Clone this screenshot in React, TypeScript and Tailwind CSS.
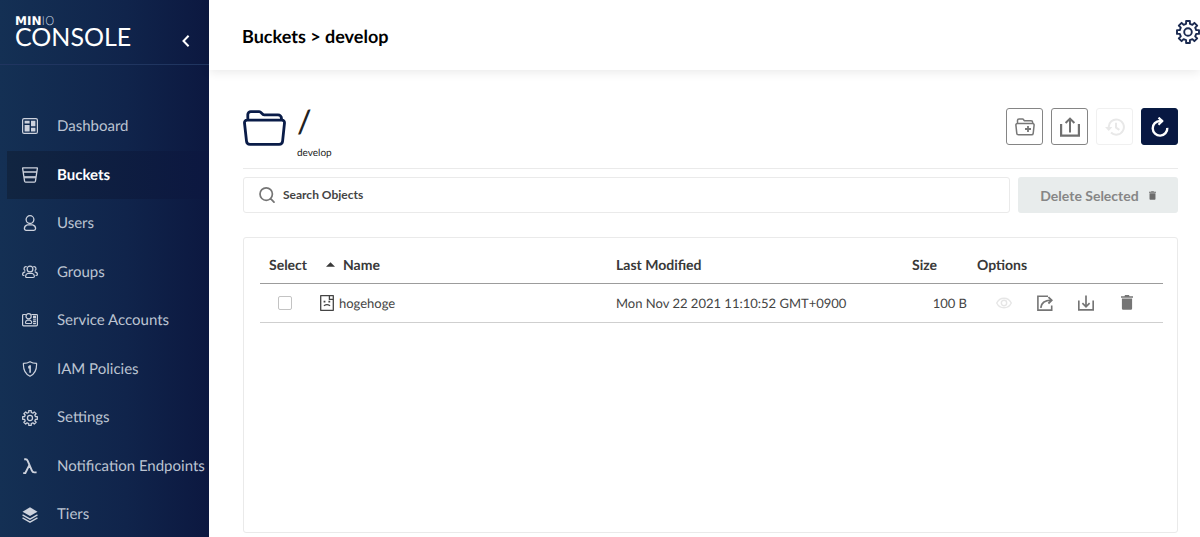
import React from "react";

type IconProps = { className?: string };

const stroke = {
  fill: "none",
  stroke: "currentColor",
  strokeLinecap: "round" as const,
  strokeLinejoin: "round" as const,
};

const DashboardIcon = ({ className }: IconProps) => (
  <svg viewBox="0 0 16 16" className={className} aria-hidden="true">
    <rect x="0.6" y="0.6" width="14.8" height="14.8" rx="1.5" {...stroke} strokeWidth="1.2" />
    <path fill="currentColor" d="M2.6 2.7h5v2.8h-5zM9 2.7h4.4v5.6H9zM2.6 7h5v6.4h-5zM9 9.8h4.4v3.6H9z" />
  </svg>
);

const BucketIcon = ({ className }: IconProps) => (
  <svg viewBox="0 0 16 16" className={className} aria-hidden="true">
    <path {...stroke} strokeWidth="1.3" d="M1 .8h14a.4.4 0 0 1 .4.5l-2 13a1 1 0 0 1-1 .9H3.600a1 1 0 0 1-1-.9L.6 1.300A.4.4 0 0 1 1 .8zM1.300 5h13.400M2 10h12" />
    <path fill="currentColor" opacity=".6" d="M2.300 9.600h11.400l-.2 2h-11z" />
  </svg>
);

const UserIcon = ({ className }: IconProps) => (
  <svg viewBox="0 0 16 16" className={className} aria-hidden="true">
    <circle cx="8" cy="4.600" r="3.900" {...stroke} strokeWidth="1.300" />
    <path {...stroke} strokeWidth="1.300" d="M5.300 9.800h5.400c2 .6 2.900 2.200 2.900 3.700 0 1.200-.7 1.800-1.700 1.800H4.100c-1 0-1.700-.6-1.700-1.800 0-1.500.9-3.100 2.900-3.700z" />
  </svg>
);

const GroupsIcon = ({ className }: IconProps) => (
  <svg viewBox="0 0 16 16" className={className} aria-hidden="true">
    <g {...stroke} strokeWidth="1.200">
      <circle cx="8" cy="5" r="2.900" />
      <path d="M6 9.300h4c1.600.5 2.400 1.700 2.400 3 0 .8-.5 1.200-1.200 1.200H4.800c-.7 0-1.200-.4-1.200-1.200 0-1.300.8-2.500 2.400-3z" />
      <path d="M4.200 2.700a2 2 0 0 0-1.400 3.600M2.900 7.800C1.400 8.100.6 9.300.6 10.500c0 .7.4 1 1.400 1M11.800 2.700a2 2 0 0 1 1.400 3.600M13.100 7.800c1.500.3 2.300 1.500 2.300 2.700 0 .7-.4 1-1.400 1" />
    </g>
  </svg>
);

const ServiceAccountsIcon = ({ className }: IconProps) => (
  <svg viewBox="0 0 16 16" className={className} aria-hidden="true">
    <g {...stroke} strokeWidth="1.200">
      <path d="M3.500 2.500H1.600a1 1 0 0 0-1 1v9.300a1 1 0 0 0 1 1h12.800a1 1 0 0 0 1-1V3.500a1 1 0 0 0-1-1H9.800" />
      <circle cx="6.600" cy="4.300" r="2.600" />
      <path d="M5.200 8.200h2.800c1.100.4 1.700 1.300 1.700 2.200 0 .7-.4 1.100-1 1.100H4.500c-.6 0-1-.4-1-1.100 0-.9.600-1.800 1.700-2.200z" />
      <path d="M11.500 7.800h2M11.500 9.700h2M11.500 11.600h2" />
    </g>
    <path fill="currentColor" d="M11 3.600h3v2.800h-3z" />
  </svg>
);

const PolicyIcon = ({ className }: IconProps) => (
  <svg viewBox="0 0 16 16" className={className} aria-hidden="true">
    <path {...stroke} strokeWidth="1.200" d="M8 .7c2 1.300 4.200 1.700 6.600 1.700.2 5.600-1 10.400-6.600 12.900C2.400 12.800 1.200 8 1.400 2.400 3.800 2.400 6 2 8 .7z" />
    <path fill="currentColor" d="M8.900 4.200v7.600H7.300V7.400H6.200V5.300L7.500 4.200z" />
  </svg>
);

const GearIcon = ({ className }: IconProps) => (
  <svg viewBox="0 0 24 24" className={className} aria-hidden="true">
    <g {...stroke} strokeWidth="1.900">
      <path d="M10.1 1h3.800v2.800l2.500 1 2-2 2.800 2.800-2 2 1 2.500H23v3.800h-2.800l-1 2.500 2 2-2.800 2.800-2-2-2.500 1V23h-3.800v-2.800l-2.500-1-2 2-2.800-2.800 2-2-1-2.500H1v-3.800h2.800l1-2.500-2-2 2.800-2.800 2 2 2.500-1z" />
      <circle cx="12" cy="12" r="3.800" />
    </g>
  </svg>
);

const LambdaIcon = ({ className }: IconProps) => (
  <svg viewBox="0 0 16 16" className={className} aria-hidden="true">
    <path {...stroke} strokeWidth="1.900" strokeLinecap="butt" d="M2.200 1.300h1.400c1.100 0 1.600.4 2.100 1.500l4.200 9.900c.5 1.300 1 1.700 2.200 1.700h2.500M7.600 6.600 3.200 15.200H1.200" />
  </svg>
);

const TiersIcon = ({ className }: IconProps) => (
  <svg viewBox="0 0 16 16" className={className} aria-hidden="true">
    <path fill="currentColor" d="M8 .3 15.500 4.700 8 9.100.5 4.700z" />
    <path {...stroke} strokeWidth="1.400" d="M1 8.200l7 4 7-4M1 11.200l7 4 7-4" />
  </svg>
);

const FolderIcon = ({ className }: IconProps) => (
  <svg viewBox="0 0 43 36" className={className} aria-hidden="true">
    <path
      {...stroke}
      strokeWidth="2.800"
      d="M4.800 10V4.600a3 3 0 0 1 3-3h8.400c2.200 0 2.600 3.300 4.900 3.300H35a3.500 3.500 0 0 1 3.500 3.500V10M4 10.200h35a2.500 2.500 0 0 1 2.500 2.800l-1.900 18.200a3.500 3.500 0 0 1-3.500 3.200H7a3.500 3.500 0 0 1-3.500-3.200L1.500 13A2.500 2.500 0 0 1 4 10.200z"
    />
  </svg>
);

const NewFolderIcon = ({ className }: IconProps) => (
  <svg viewBox="0 0 20 18" className={className} aria-hidden="true">
    <path {...stroke} strokeWidth="1.500" d="M2.500 5.500V2.600a1.500 1.500 0 0 1 1.500-1.500h3.600c1.200 0 1.200 1.700 2.400 1.700h6a1.700 1.700 0 0 1 1.700 1.700v1M2.300 5.500h15.400a1.400 1.400 0 0 1 1.400 1.600l-.9 8.200a1.700 1.700 0 0 1-1.700 1.500h-13a1.700 1.700 0 0 1-1.700-1.500L.9 7.100a1.400 1.400 0 0 1 1.400-1.600z" />
    <path {...stroke} strokeWidth="1.800" strokeLinecap="butt" d="M13 8v6M10 11h6" />
  </svg>
);

const UploadIcon = ({ className }: IconProps) => (
  <svg viewBox="0 0 20 20" className={className} aria-hidden="true">
    <path {...stroke} strokeLinecap="butt" strokeLinejoin="miter" strokeWidth="2.200" d="M1.100 7v11.700h17.800V7" />
    <path {...stroke} strokeLinecap="butt" strokeLinejoin="miter" strokeWidth="2" d="M10 15.500V2M5.600 6 10 1.600 14.400 6" />
  </svg>
);

const HistoryIcon = ({ className }: IconProps) => (
  <svg viewBox="0 0 20 18" className={className} aria-hidden="true">
    <path fill="currentColor" d="M0 9h7.400L3.700 13z" />
    <path {...stroke} strokeLinecap="butt" strokeWidth="2" d="M3.700 9.500A7.600 7.600 0 1 1 6 14.500M11 4.800V9.600l3.400 2.200" />
  </svg>
);

const RefreshIcon = ({ className }: IconProps) => (
  <svg viewBox="0 0 18 20" className={className} aria-hidden="true">
    <path {...stroke} strokeLinecap="butt" strokeWidth="2.400" d="M16.300 10.800A7.300 7.300 0 1 1 9 4h2.500" />
    <path {...stroke} strokeLinecap="butt" strokeLinejoin="miter" strokeWidth="2.200" d="M7.500.6 11.200 4 7.500 7.700" />
  </svg>
);

const SearchIcon = ({ className }: IconProps) => (
  <svg viewBox="0 0 16 16" className={className} aria-hidden="true">
    <path {...stroke} strokeWidth="1.700" d="M11.600 11.600 15 15.200M13.400 7.100A6.200 6.200 0 1 1 1 7.100a6.200 6.200 0 0 1 12.400 0z" />
  </svg>
);

const TrashIcon = ({ className }: IconProps) => (
  <svg viewBox="0 0 12 15" className={className} aria-hidden="true">
    <path fill="currentColor" d="M0 1.200h3.500L4 0h4l.5 1.200H12v1.500H0zM.9 3.600h10.200v10a1.200 1.200 0 0 1-1.200 1.200H2.100a1.200 1.200 0 0 1-1.200-1.200z" />
  </svg>
);

const FileIcon = ({ className }: IconProps) => (
  <svg viewBox="0 0 14 16" className={className} aria-hidden="true">
    <path {...stroke} strokeWidth="1.300" d="M.7.7h12.600v14.600H.7zM9.400.8v3.600h3.800" />
    <path fill="currentColor" d="M3.600 5.700h1.800v1.800H3.600zM8.400 5.700h1.800v1.800H8.400z" />
    <path {...stroke} strokeWidth="1.200" d="M4.300 10.500c1.400-.9 4-.9 5.400 0" />
  </svg>
);

const EyeIcon = ({ className }: IconProps) => (
  <svg viewBox="0 0 16 12" className={className} aria-hidden="true">
    <path {...stroke} strokeWidth="1.400" d="M.7 6C2.300 2.800 5 1.200 8 1.200S13.700 2.800 15.300 6C13.700 9.200 11 10.800 8 10.800S2.300 9.200.7 6z" />
    <circle cx="8" cy="6" r="2.700" {...stroke} strokeWidth="1.400" />
  </svg>
);

const ShareIcon = ({ className }: IconProps) => (
  <svg viewBox="0 0 16 16" className={className} aria-hidden="true">
    <path {...stroke} strokeLinecap="butt" strokeLinejoin="miter" strokeWidth="1.600" d="M11 1.200H.9v13.900h13.800V10.500" />
    <path {...stroke} strokeLinecap="butt" strokeWidth="1.800" d="M3.800 12.800C4.300 8.500 7.300 5.400 14 5.200" />
    <path {...stroke} strokeLinecap="butt" strokeLinejoin="miter" strokeWidth="1.800" d="M11.400 2.100 14.700 5.200l-3.300 3.300" />
  </svg>
);

const DownloadIcon = ({ className }: IconProps) => (
  <svg viewBox="0 0 16 16" className={className} aria-hidden="true">
    <path {...stroke} strokeLinecap="butt" strokeLinejoin="miter" strokeWidth="1.700" d="M.8 5.500v9.400h14.400V5.500M8 .4v11.200M4.400 8.200 8 11.800l3.600-3.600" />
  </svg>
);

const ChevronIcon = ({ className }: IconProps) => (
  <svg viewBox="0 0 8 12" className={className} aria-hidden="true">
    <path {...stroke} strokeLinecap="butt" strokeLinejoin="miter" strokeWidth="2" d="M6.600.8 1.500 6l5.100 5.200" />
  </svg>
);

const navItems = [
  { label: "Dashboard", Icon: DashboardIcon },
  { label: "Buckets", Icon: BucketIcon, active: true },
  { label: "Users", Icon: UserIcon },
  { label: "Groups", Icon: GroupsIcon },
  { label: "Service Accounts", Icon: ServiceAccountsIcon },
  { label: "IAM Policies", Icon: PolicyIcon },
  { label: "Settings", Icon: GearIcon },
  { label: "Notification Endpoints", Icon: LambdaIcon },
  { label: "Tiers", Icon: TiersIcon },
];

function Sidebar() {
  return (
    <aside className="flex h-full w-[209px] shrink-0 flex-col overflow-hidden bg-linear-to-r from-[#143054] via-[#10244b] via-60% to-[#0c1840]">
      <div className="flex h-[65px] shrink-0 items-start justify-between border-b border-[#203560] pr-[19px] pl-[15px] text-white">
        <a href="#console" aria-label="MinIO Console" className="pt-[15px]">
          <span className="block font-['DejaVu_Sans'] text-[12px] leading-[12px]">
            <b>MIN</b>
            <span className="font-extralight text-slate-300">IO</span>
          </span>
          <span className="block text-[25px] leading-[20px]">CONSOLE</span>
        </a>
        <button type="button" aria-label="Collapse menu" className="pt-[35px]">
          <ChevronIcon className="h-3 w-2" />
        </button>
      </div>
      <nav className="pt-[37px]">
        <ul className="grid h-[437px] auto-rows-fr">
          {navItems.map(({ label, Icon, active }) => (
            <li key={label} className="flex pl-[7px]">
              <a
                href="#nav"
                aria-current={active ? "page" : undefined}
                className={
                  active
                    ? "flex flex-1 items-center gap-[19px] bg-linear-to-r from-[#112541] to-[#0c1740] pl-[15px] text-[15px] font-bold whitespace-nowrap text-white"
                    : "flex flex-1 items-center gap-[19px] pl-[15px] text-[15px] whitespace-nowrap text-[#bcc4d2]"
                }
              >
                <Icon className="size-4 shrink-0 text-[#cdd2dd]" />
                {label}
              </a>
            </li>
          ))}
        </ul>
      </nav>
    </aside>
  );
}

function Toolbar() {
  const base = "flex size-[37px] items-center justify-center rounded-[3px] border";
  return (
    <div className="flex gap-2 pt-2">
      <button type="button" aria-label="Create folder" className={`${base} border-[#858585] text-[#777]`}>
        <NewFolderIcon className="h-[18px] w-5" />
      </button>
      <button type="button" aria-label="Upload" className={`${base} border-[#858585] text-[#707070]`}>
        <UploadIcon className="size-5" />
      </button>
      <button type="button" aria-label="Rewind" disabled className={`${base} border-[#f0f0f0] text-[#e8e8e8]`}>
        <HistoryIcon className="h-[18px] w-5" />
      </button>
      <button type="button" aria-label="Refresh" className={`${base} border-[#081c42] bg-[#081842] text-white`}>
        <RefreshIcon className="h-5 w-[18px]" />
      </button>
    </div>
  );
}

function ObjectsTable() {
  return (
    <table className="w-full table-fixed border-collapse text-left text-[#444]">
      <colgroup>
        <col className="w-[60px]" />
        <col className="w-[296px]" />
        <col />
        <col className="w-[95px]" />
        <col className="w-[196px]" />
      </colgroup>
      <thead className="text-[14px] leading-5 text-[#393939]">
        <tr className="h-9 border-b border-[#9c9c9c]">
          <th scope="col" className="pl-[9px]">Select</th>
          <th scope="col" className="pl-[6px]">
            <span className="flex items-center gap-2">
              <svg viewBox="0 0 10 5" className="h-[5px] w-[9px]" aria-hidden="true">
                <path fill="currentColor" d="M0 5 5 0l5 5z" />
              </svg>
              Name
            </span>
          </th>
          <th scope="col">Last Modified</th>
          <th scope="col" className="pr-[30px] text-right">Size</th>
          <th scope="col" className="pl-[10px]">Options</th>
        </tr>
      </thead>
      <tbody className="text-[13px] leading-5">
        <tr className="h-[39px] border-b border-[#cfcfcf]">
          <td className="pl-[18px]">
            <input
              type="checkbox"
              aria-label="Select hogehoge"
              className="block size-[14px] appearance-none rounded-[2px] border border-[#c3c3c3] bg-white"
            />
          </td>
          <td>
            <span className="flex items-center gap-[5px]">
              <FileIcon className="h-4 w-[14px]" />
              hogehoge
            </span>
          </td>
          <td>Mon Nov 22 2021 11:10:52 GMT+0900</td>
          <td className="text-right">100 B</td>
          <td className="pl-4">
            <span className="flex text-[#757575] [&>button]:flex [&>button]:h-5 [&>button]:w-[41px] [&>button]:items-center [&>button]:justify-center">
              <button type="button" aria-label="Preview" disabled className="text-[#e6e6e6]">
                <EyeIcon className="h-3 w-4" />
              </button>
              <button type="button" aria-label="Share">
                <ShareIcon className="size-4" />
              </button>
              <button type="button" aria-label="Download">
                <DownloadIcon className="size-4" />
              </button>
              <button type="button" aria-label="Delete">
                <TrashIcon className="h-[15px] w-3" />
              </button>
            </span>
          </td>
        </tr>
      </tbody>
    </table>
  );
}

export default function App() {
  return (
    <div className="flex h-screen bg-white font-[Lato,sans-serif] text-black [text-rendering:geometricPrecision]">
      <Sidebar />
      <div className="flex min-w-0 flex-1 flex-col">
        <header className="flex h-[70px] shrink-0 items-center justify-between pl-[33px] shadow-[0_2px_10px_rgba(0,0,0,0.09)]">
          <h1 className="pt-0.5 text-[18px] font-bold">Buckets &gt; develop</h1>
          <button type="button" aria-label="Configure bucket" className="pb-[6px] text-[#1b2a50]">
            <GearIcon className="size-6" />
          </button>
        </header>
        <main className="flex min-h-0 flex-1 flex-col pt-[30px] pr-[22px] pb-1 pl-[34px]">
          <section className="flex h-[69px] justify-between border-b border-[#eaeaea]">
            <div className="flex gap-[11px]">
              <FolderIcon className="mt-[10px] h-9 w-[43px] text-[#0a1c48]" />
              <div className="text-[#222]">
                <h2 className="text-[32px] leading-[42px] font-medium">/</h2>
                <p className="text-[10px] leading-[22px]">develop</p>
              </div>
            </div>
            <Toolbar />
          </section>
          <div className="mt-2 flex gap-2">
            <label className="flex h-[36px] flex-1 items-center gap-2 rounded-[3px] border border-[#eaeaea] pl-[15px] text-[#757575]">
              <SearchIcon className="size-4" />
              <input
                type="text"
                aria-label="Search Objects"
                placeholder="Search Objects"
                className="flex-1 text-[12px] font-bold text-[#393939] outline-none placeholder:text-[#444]"
              />
            </label>
            <button
              type="button"
              disabled
              className="flex h-[36px] w-40 items-center justify-center gap-[10px] rounded-[3px] bg-[#e8ecec] text-[14px] font-bold text-[#868686]"
            >
              Delete Selected
              <TrashIcon className="h-[9px] w-[7px] text-[#6c6c6c]" />
            </button>
          </div>
          <section className="mt-6 flex-1 rounded-[3px] border border-[#eaeaea] pt-[9px] pr-[14px] pl-4">
            <ObjectsTable />
          </section>
        </main>
      </div>
    </div>
  );
}
